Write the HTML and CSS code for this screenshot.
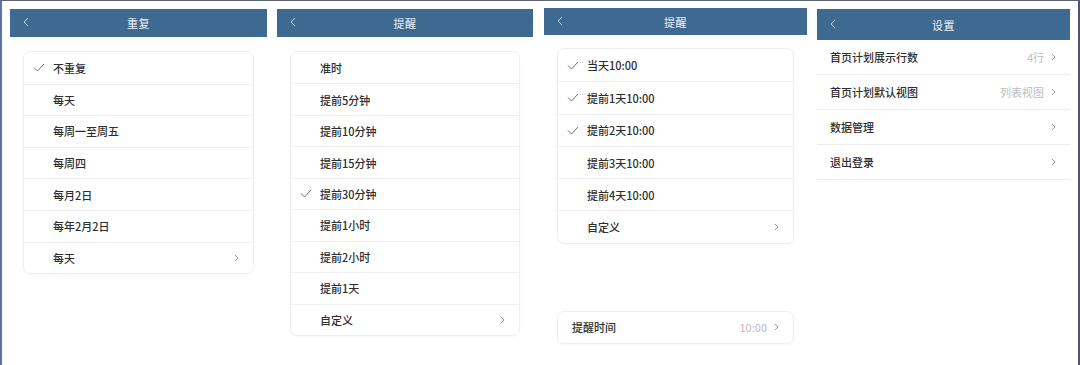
FILE: index.html
```html
<!DOCTYPE html>
<html>
<head>
  <title>设置</title>
  <meta name="viewport" content="width=device-width, initial-scale=1.0">
  <link rel="stylesheet" href="styles.css">
</head>
<body>
  <div class="screens">

    <div class="panel panel-repeat">
      <div class="header">
        <svg class="back" viewBox="0 0 6 10"><polyline points="5,1 1,5 5,9"/></svg>
        <span class="title">重复</span>
      </div>
      <div class="card">
        <div class="row"><svg class="check" viewBox="0 0 12 9"><polyline points="1,4.5 4.5,8 11,1"/></svg><span class="label">不重复</span></div>
        <div class="row"><span class="blank"></span><span class="label">每天</span></div>
        <div class="row"><span class="blank"></span><span class="label">每周一至周五</span></div>
        <div class="row"><span class="blank"></span><span class="label">每周四</span></div>
        <div class="row"><span class="blank"></span><span class="label">每月2日</span></div>
        <div class="row"><span class="blank"></span><span class="label">每年2月2日</span></div>
        <div class="row"><span class="blank"></span><span class="label">每天</span><svg class="chev" viewBox="0 0 5 8"><polyline points="1,1 4,4 1,7"/></svg></div>
      </div>
    </div>

    <div class="panel panel-remind">
      <div class="header">
        <svg class="back" viewBox="0 0 6 10"><polyline points="5,1 1,5 5,9"/></svg>
        <span class="title">提醒</span>
      </div>
      <div class="card">
        <div class="row"><span class="blank"></span><span class="label">准时</span></div>
        <div class="row"><span class="blank"></span><span class="label">提前5分钟</span></div>
        <div class="row"><span class="blank"></span><span class="label">提前10分钟</span></div>
        <div class="row"><span class="blank"></span><span class="label">提前15分钟</span></div>
        <div class="row"><svg class="check" viewBox="0 0 12 9"><polyline points="1,4.5 4.5,8 11,1"/></svg><span class="label">提前30分钟</span></div>
        <div class="row"><span class="blank"></span><span class="label">提前1小时</span></div>
        <div class="row"><span class="blank"></span><span class="label">提前2小时</span></div>
        <div class="row"><span class="blank"></span><span class="label">提前1天</span></div>
        <div class="row"><span class="blank"></span><span class="label">自定义</span><svg class="chev" viewBox="0 0 5 8"><polyline points="1,1 4,4 1,7"/></svg></div>
      </div>
    </div>

    <div class="panel panel-allday">
      <div class="header">
        <svg class="back" viewBox="0 0 6 10"><polyline points="5,1 1,5 5,9"/></svg>
        <span class="title">提醒</span>
      </div>
      <div class="card">
        <div class="row"><svg class="check" viewBox="0 0 12 9"><polyline points="1,4.5 4.5,8 11,1"/></svg><span class="label">当天10:00</span></div>
        <div class="row"><svg class="check" viewBox="0 0 12 9"><polyline points="1,4.5 4.5,8 11,1"/></svg><span class="label">提前1天10:00</span></div>
        <div class="row"><svg class="check" viewBox="0 0 12 9"><polyline points="1,4.5 4.5,8 11,1"/></svg><span class="label">提前2天10:00</span></div>
        <div class="row"><span class="blank"></span><span class="label">提前3天10:00</span></div>
        <div class="row"><span class="blank"></span><span class="label">提前4天10:00</span></div>
        <div class="row"><span class="blank"></span><span class="label">自定义</span><svg class="chev" viewBox="0 0 5 8"><polyline points="1,1 4,4 1,7"/></svg></div>
      </div>
      <div class="card card-time">
        <div class="row"><span class="label">提醒时间</span><span class="value">10:00</span><svg class="chev" viewBox="0 0 5 8"><polyline points="1,1 4,4 1,7"/></svg></div>
      </div>
    </div>

    <div class="panel panel-settings">
      <div class="header">
        <svg class="back" viewBox="0 0 6 10"><polyline points="5,1 1,5 5,9"/></svg>
        <span class="title">设置</span>
      </div>
      <div class="list">
        <div class="row"><span class="label">首页计划展示行数</span><span class="value">4行</span><svg class="chev" viewBox="0 0 5 8"><polyline points="1,1 4,4 1,7"/></svg></div>
        <div class="row"><span class="label">首页计划默认视图</span><span class="value">列表视图</span><svg class="chev" viewBox="0 0 5 8"><polyline points="1,1 4,4 1,7"/></svg></div>
        <div class="row"><span class="label">数据管理</span><svg class="chev" viewBox="0 0 5 8"><polyline points="1,1 4,4 1,7"/></svg></div>
        <div class="row"><span class="label">退出登录</span><svg class="chev" viewBox="0 0 5 8"><polyline points="1,1 4,4 1,7"/></svg></div>
      </div>
    </div>

  </div>
</body>
</html>
```

FILE: styles.css
```css
html, body {
  height: 100%;
}

body {
  margin: 0;
  box-sizing: border-box;
  background-color: #fff;
  border-top: 1px solid #5c6474;
  border-left: 2px solid #5a76a6;
  border-right: 2px solid #4e5668;
  font-family: "Noto Sans CJK SC", "Noto Sans", sans-serif;
  color: #333;
  overflow: hidden;
}

.screens {
  display: flex;
  align-items: flex-start;
  padding: 8px 0 0 8px;
}

.panel {
  flex: none;
  display: flex;
  flex-direction: column;
}

.panel-repeat { width: 257px; margin-right: 10px; --row: 31.6px; }
.panel-remind { width: 256px; margin-right: 11px; --row: 31.45px; }
.panel-allday { width: 263px; margin-right: 10px; margin-top: -1px; --row: 32.3px; }
.panel-settings { width: 253px; }

.header {
  height: 28px;
  background-color: #3e6a91;
  display: flex;
  align-items: center;
  justify-content: center;
  position: relative;
}

.panel-allday .header { height: 27px; }
.panel-settings .header { height: 31px; }

.title {
  color: #eef2f6;
  font-size: 11px;
  letter-spacing: 0.5px;
}

.back {
  position: absolute;
  left: 13px;
  top: 50%;
  width: 6px;
  height: 10px;
  margin-top: -6px;
  fill: none;
  stroke: #c9d6e3;
  stroke-width: 1;
}

.card {
  margin: 14px 13px 0 13px;
  background-color: #fff;
  border: 1px solid #efefef;
  border-radius: 7px;
  box-shadow: 0 1px 2px rgba(0, 0, 0, 0.03);
  overflow: hidden;
}

.panel-allday .card { margin-top: 13px; }

.card .row {
  height: var(--row);
  box-sizing: border-box;
  display: flex;
  align-items: center;
  padding: 0 14px 0 9px;
  border-top: 1px solid #f0f0f0;
}

.card .row:first-child {
  border-top: none;
}

.panel-allday .card-time {
  margin-top: 67px;
}

.card-time .row {
  height: 31px;
  padding-left: 14px;
}

.label {
  font-size: 11px;
  font-weight: 500;
  color: #2e2e2e;
  flex: 1;
}

.value {
  font-size: 11px;
  color: #bdbdbd;
  margin-right: 7px;
}

.check, .blank {
  flex: none;
  width: 12px;
  height: 9px;
  margin-right: 8px;
}

.check {
  fill: none;
  stroke: #707070;
  stroke-width: 1;
}

.chev {
  flex: none;
  width: 5px;
  height: 8px;
  fill: none;
  stroke: #9a9a9a;
  stroke-width: 1;
}

.list .row {
  height: 35px;
  box-sizing: border-box;
  display: flex;
  align-items: center;
  padding: 0 14px 0 13px;
  border-bottom: 1px solid #ececec;
}
```
